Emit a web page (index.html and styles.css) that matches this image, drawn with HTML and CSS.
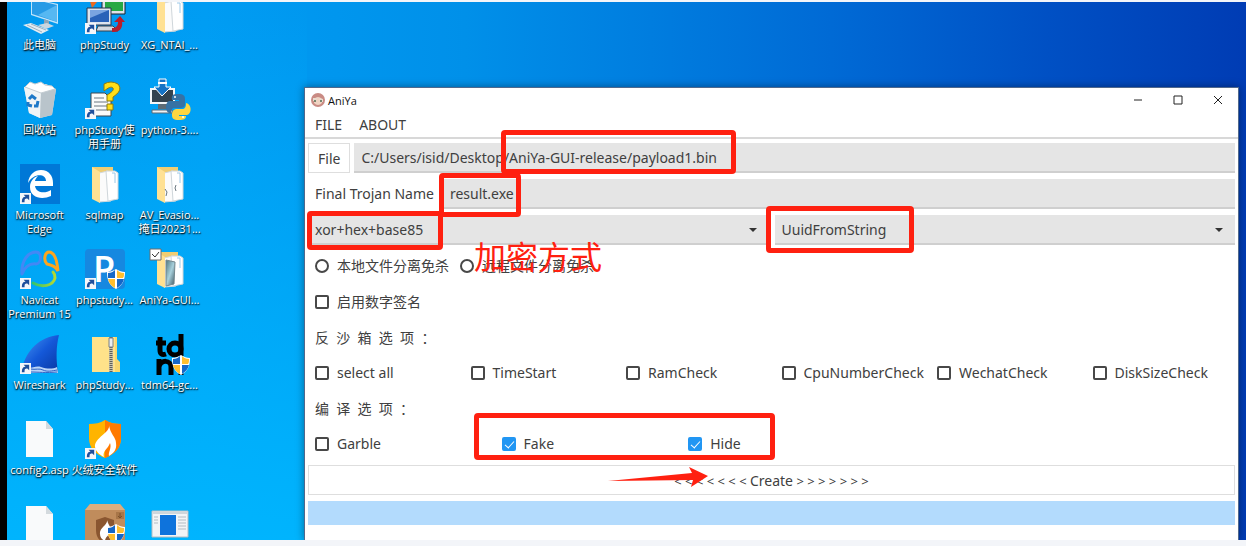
FILE: index.html
```html
<!doctype html>
<html lang="zh-CN">
    <head>
        <meta charset="utf-8">
        <title>AniYa</title>
        <link rel="stylesheet" href="styles.css">
    </head>

    <body>
    <!-- shared icon parts -->
    <svg class="defs" aria-hidden="true">
        <defs>
            <linearGradient id="fin" x1="0" y1="0" x2="1" y2="1">
                <stop offset="0" stop-color="#4a9bf5"/>
                <stop offset=".5" stop-color="#1458d8"/>
                <stop offset="1" stop-color="#0836a0"/>
            </linearGradient>
            <linearGradient id="navicat" x1="0" y1="0" x2="1" y2="0">
                <stop offset="0" stop-color="#35c46a"/>
                <stop offset="1" stop-color="#b5d832"/>
            </linearGradient>
            <linearGradient id="photo" x1="0" y1="0" x2="1" y2="1">
                <stop offset="0" stop-color="#4c7680"/>
                <stop offset=".5" stop-color="#a8d0dc"/>
                <stop offset="1" stop-color="#38505a"/>
            </linearGradient>
            <symbol id="shortcut" viewBox="0 0 12 12">
                <path d="M0 0h12v12H0z" fill="#f4f6fa"/>
                <path d="M2 10c0-4 1-6 4-6L4 2h6v6L8 6c-3 0-3 1-3 4z" fill="#1f4f9c"/>
            </symbol>
            <symbol id="shield" viewBox="0 0 18 20">
                <path d="M9 0c3 2 6 3 9 3 0 8-2 13-9 17C2 16 0 11 0 3c3 0 6-1 9-3z" fill="#fff"/>
                <path d="M8 1v8H1V4c3 0 5-1 7-3zM10 10h7c-1 4-3 6-7 9z" fill="#1467c8"/>
                <path d="M10 1c2 2 4 3 7 3 0 2 0 4-1 5h-6zM1 10h7v9c-4-2-6-5-7-9z" fill="#ffbe2e"/>
            </symbol>
            <symbol id="folder" viewBox="0 0 40 40">
                <path d="M7 3h21v30H7z" fill="#f0cd72"/>
                <path d="M14 9l9-2 3 3v27l-12 1z" fill="#fbfbfb" stroke="#d3d9dc"/>
                <path d="M21 7h9l3 2v26l-10 2z" fill="#fff" stroke="#cfd6da"/>
                <path d="M27 9h3v10" fill="none" stroke="#9cc9e8"/>
                <path d="M7 3l8 5v31l-8-4z" fill="#ffe193"/>
            </symbol>
            <symbol id="page" viewBox="0 0 40 40">
                <path d="M6 2h20l7 8v28H6z" fill="#f9fafb"/>
                <path d="M26 2v8h7z" fill="#d4dade"/>
            </symbol>
        </defs>
    </svg>

    <main class="desktop">
        <ul class="icons">
            <li>
                <svg viewBox="0 0 40 40">
                    <path d="M11 4l27 6v20l-27-9z" fill="#bfe4fa"/>
                    <path d="M12 5l25 6v17l-25-8z" fill="#279be6"/>
                    <path d="M37 11v17l-19-7z" fill="#56b8f2"/>
                    <path d="M24 25l5 2v5l-5-2z" fill="#8fa5b5"/>
                    <path d="M18 31l9-2 7 3-8 3z" fill="#c8d6e0"/>
                    <path d="M3 31l8-2 18 7-8 4z" fill="#e3ecf2"/>
                    <path d="M7 31l15 7m-11-8l15 6" stroke="#9ab0c0"/>
                </svg>
                <span>此电脑</span>
            </li>
            <li>
                <svg viewBox="0 0 40 40">
                    <path d="M4 4l8 4-5 6z" fill="#e86a20"/>
                    <path d="M17 3h23v17H17z" fill="#dde3e8" stroke="#1b2430"/>
                    <path d="M20 4h18v13H20z" fill="#27a844"/>
                    <path d="M2 14h24v17H2z" fill="#dce4ee" stroke="#26344e"/>
                    <path d="M5 16h19v12H5z" fill="#2a62b8"/>
                    <path d="M5 16h19L5 24z" fill="#7aa4e0"/>
                    <path d="M13 32h15l5 5H11z" fill="#d3d9e0" stroke="#39414c"/>
                    <path d="M27 38c9 1 11-6 10-10h3l-5-6-6 6h4c0 4-2 6-6 6z" fill="#b61f2c"/>
                    <use href="#shortcut" y="29" width="11" height="11"/>
                </svg>
                <span>phpStudy</span>
            </li>
            <li>
                <svg viewBox="0 0 40 40"><use href="#folder"/></svg>
                <span>XG_NTAI_...</span>
            </li>

            <li>
                <svg viewBox="0 0 40 40">
                    <path d="M4 8l22-3 10 5-4 26-12 3-11-5z" fill="#dbe3e8"/>
                    <path d="M4 8l17 5-1 26-11-5z" fill="#f0f4f6"/>
                    <path d="M36 10l-15 3-1 26 12-3z" fill="#b9c4cb"/>
                    <path d="M5 8l5-5 5 2 6-2 4 3 7 1 3 3-14 4z" fill="#fff" stroke="#c3ccd2"/>
                    <g fill="none" stroke="#1d78c8" stroke-width="3">
                        <path d="M9 20l3-3 4 3M18 22l-1 5h-3M12 27l-4-1v-3"/>
                    </g>
                </svg>
                <span>回收站</span>
            </li>
            <li>
                <svg viewBox="0 0 40 40">
                    <path d="M6 14h14l6 6v17H6z" fill="#fafafa" stroke="#3c4650"/>
                    <path d="M9 19h10M9 23h14M9 27h14M9 31h14" stroke="#6b7680"/>
                    <path d="M19 12V5q7-4 14 0c4 5 1 9-5 13v4h-6v-6c5-3 7-5 6-7-2-2-5 0-9 3zM22 25h6v6h-6z" fill="#ffde17" stroke="#8a7a10"/>
                    <use href="#shortcut" y="29" width="11" height="11"/>
                </svg>
                <span>phpStudy使用手册</span>
            </li>
            <li>
                <svg viewBox="0 0 40 40">
                    <path d="M1 10h23v14H1z" fill="#34434f" stroke="#f3f6f8" stroke-width="2"/>
                    <path d="M8 25h9v5H8z" fill="#5c6b76"/>
                    <path d="M2 31h20v3H2z" fill="#eef2f5" stroke="#5c6b76"/>
                    <path d="M9 0h7v8h5l-9 9-8-9h5z" fill="#1673c5" stroke="#fff"/>
                    <path d="M8 4h9" stroke="#fff" stroke-width="2"/>
                    <path d="M28 15c6 0 7 2 7 5v5c0 3-2 4-5 4h-5c-3 0-4 2-4 5h-2c-4-1-4-11 0-12h10v-1h-7c-1-5 1-6 6-6z" fill="#3672a4"/>
                    <path d="M29 41c-6 0-7-2-7-5 0-4 2-6 5-6h5c3 0 4-2 4-6 6 1 6 11 1 12h-8v1h7c0 3-2 4-7 4z" fill="#ffd640"/>
                    <circle cx="25" cy="18" r="1" fill="#fff"/>
                    <circle cx="33" cy="38" r="1" fill="#fff"/>
                </svg>
                <span>python-3....</span>
            </li>

            <li>
                <svg viewBox="0 0 40 40">
                    <path d="M0 0h40v40H0z" fill="#0078d7"/>
                    <path d="M8 19C9 10 15 6 21 6c8 0 12 6 12 13v3H15c1 7 10 8 16 4v6c-9 4-21 2-21-9 0-6 4-10 8-11-2 2-3 4-3 5h11c0-8-13-8-18 2z" fill="#fff"/>
                    <use href="#shortcut" y="29" width="11" height="11"/>
                </svg>
                <span>Microsoft Edge</span>
            </li>
            <li>
                <svg viewBox="0 0 40 40"><use href="#folder"/></svg>
                <span>sqlmap</span>
            </li>
            <li>
                <svg viewBox="0 0 40 40">
                    <use href="#folder"/>
                    <path d="M15 25l2 3-1 4M26 21l-1 3 1 3" fill="none" stroke="#6a7780"/>
                </svg>
                <span>AV_Evasio... 掩日20231...</span>
            </li>

            <li>
                <svg viewBox="0 0 40 40">
                    <g fill="none" stroke-width="3" stroke-linecap="round">
                        <path d="M2 25C1 12 8 3 16 3c6 0 6 11 0 12-7-1-12 4-14 10" stroke="#4388f5"/>
                        <path d="M27 15c-4-4-2-12 2-12 5 0 8 8 9 19-2-4-6-6-11-7" stroke="#ffa51d"/>
                        <path d="M13 34c9 5 20 3 22-5 0-2 0-4-2-6" stroke="url(#navicat)"/>
                    </g>
                    <use href="#shortcut" y="29" width="11" height="11"/>
                </svg>
                <span>Navicat Premium 15</span>
            </li>
            <li>
                <svg viewBox="0 0 40 40">
                    <rect width="40" height="40" rx="4" fill="#1688e0"/>
                    <text x="8" y="33" class="logo-p">P</text>
                    <use href="#shield" x="22" y="20" width="18" height="20"/>
                    <use href="#shortcut" y="29" width="11" height="11"/>
                </svg>
                <span>phpstudy...</span>
            </li>
            <li>
                <svg viewBox="0 0 40 40">
                    <use href="#folder"/>
                    <path d="M16 11l9 2-1 22-8 2z" fill="url(#photo)" stroke="#74878e"/>
                    <path d="M0 0h11v11H0z" fill="#fff" stroke="#6c6c6c"/>
                    <path d="M2 5l3 3 4-5" fill="none" stroke="#333"/>
                </svg>
                <span>AniYa-GUI...</span>
            </li>

            <li>
                <svg viewBox="0 0 40 40">
                    <path d="M2 34C7 16 19 3 39 1c-3 12-3 24-1 38H4z" fill="url(#fin)"/>
                    <path d="M3 33c8 3 12-2 18 0s12 2 16 0l1 6H2z" fill="#b9d4f8"/>
                    <path d="M10 35c6 1 9-1 13 1s9 1 14 0M10 38c8 0 16 1 27 0" fill="none" stroke="#2c62c4"/>
                    <use href="#shortcut" y="29" width="11" height="11"/>
                </svg>
                <span>Wireshark</span>
            </li>
            <li>
                <svg viewBox="0 0 40 40">
                    <path d="M7 3h25v22l3 3v10H7z" fill="#f7d76f"/>
                    <path d="M7 3h23v35H7z" fill="#ffe28a"/>
                    <path d="M26 3v35" stroke="#c9c4ad" stroke-width="4"/>
                    <path d="M26 3v35" stroke="#60605a" stroke-width="3" stroke-dasharray="1 1"/>
                    <path d="M24 4h4v9h-4z" fill="#e9edf0" stroke="#7a8288"/>
                </svg>
                <span>phpStudy...</span>
            </li>
            <li>
                <svg viewBox="0 0 40 40">
                    <g fill="none" stroke="#000" stroke-width="5">
                        <path d="M10 3v13q0 6 6 4M6 9h10M31 0v22"/>
                        <ellipse cx="25" cy="15" rx="6" ry="6"/>
                        <path d="M9 41V25M9 33c2-8 12-7 12 0v8M31 26v15"/>
                    </g>
                    <use href="#shield" x="22" y="21" width="18" height="20"/>
                </svg>
                <span>tdm64-gc...</span>
            </li>

            <li>
                <svg viewBox="0 0 40 40"><use href="#page"/></svg>
                <span>config2.asp</span>
            </li>
            <li>
                <svg viewBox="0 0 40 40">
                    <path d="M20 1c5 3 10 4 16 4v14c0 10-6 16-16 20C10 35 4 29 4 19V5c6 0 11-1 16-4z" fill="#ffb400"/>
                    <path d="M20 1c5 3 10 4 16 4v14c0 10-6 16-16 20z" fill="#ff7a00"/>
                    <path d="M24 6c2 7-15 13-14 22 1 5 5 8 9 10-2-6 4-8 6-14 2 5-2 9-1 13 5-3 8-7 7-13 0-6-6-9-7-18z" fill="#fff"/>
                    <use href="#shortcut" y="29" width="11" height="11"/>
                </svg>
                <span>火绒安全软件</span>
            </li>
            <li></li>

            <li>
                <svg viewBox="0 0 40 40"><use href="#page"/></svg>
            </li>
            <li>
                <svg viewBox="0 0 40 40">
                    <path d="M5 0h30l5 6v34H0V6z" fill="#c08c5c"/>
                    <path d="M5 0h30l5 6H0z" fill="#dcae80"/>
                    <path d="M31 8h8v7h-8z" fill="#a87648"/>
                    <path d="M35 9v4m-2-1l2 2 2-2" fill="none" stroke="#7a4f2a"/>
                    <path d="M20 13l9 3v10c0 8-4 11-9 14-5-3-9-6-9-14V16z" fill="#8a5630"/>
                    <path d="M22 16c1 5-8 8-7 14 0 4 3 6 5 7 0-5 7-7 6-12-1-3-3-5-4-9z" fill="#fff"/>
                    <use href="#shield" x="22" y="20" width="18" height="20"/>
                </svg>
            </li>
            <li>
                <svg viewBox="0 0 40 40">
                    <path d="M2 7h36v26H2z" fill="#f2f4f6" stroke="#b4bcc2"/>
                    <path d="M3 8h34v2H3z" fill="#cfd6db"/>
                    <path d="M10 11h16v20H10z" fill="#0e73dc"/>
                    <path d="M4 13h4M4 16h4M4 19h4M28 13h8M28 16h8M28 19h8M28 22h8M28 25h8" stroke="#b3bcc3"/>
                </svg>
            </li>
        </ul>

        <section class="window">
            <header class="titlebar">
                <svg class="avatar" viewBox="0 0 14 14">
                    <circle cx="7" cy="7" r="7" fill="#c98b84"/>
                    <path d="M3 6q4-4 8 0v4q-4 4-8 0z" fill="#f0d3c2"/>
                    <path d="M2 5h4L5 8H2zM8 5l4 1v3H9z" fill="#e9dcd0"/>
                    <circle cx="4" cy="8" r="1" fill="#4f6b50"/>
                    <circle cx="10" cy="8" r="1" fill="#4f6b50"/>
                </svg>
                <h1>AniYa</h1>
                <button aria-label="Minimize"><svg viewBox="0 0 10 10"><path d="M1 5h8"/></svg></button>
                <button aria-label="Maximize"><svg viewBox="0 0 10 10"><path d="M1 1h8v8H1z"/></svg></button>
                <button aria-label="Close"><svg viewBox="0 0 10 10"><path d="M1 1l8 8M9 1L1 9"/></svg></button>
            </header>
            <nav class="menubar">
                <button>FILE</button>
                <button>ABOUT</button>
            </nav>

            <form class="content">
                <div class="row file-row">
                    <button type="button" class="outlined">File</button>
                    <input class="field" type="text" aria-label="File" value="C:/Users/isid/Desktop/AniYa-GUI-release/payload1.bin">
                </div>
                <div class="row name-row">
                    <label for="name">Final Trojan Name</label>
                    <input class="field" type="text" id="name" value="result.exe">
                </div>
                <div class="row selects">
                    <div class="select">
                        <select class="field" aria-label="Encoding"><option>xor+hex+base85</option></select>
                        <svg viewBox="0 0 8 4"><path d="M0 0h8L4 4z"/></svg>
                    </div>
                    <div class="select">
                        <select class="field" aria-label="Method"><option>UuidFromString</option></select>
                        <svg viewBox="0 0 8 4"><path d="M0 0h8L4 4z"/></svg>
                    </div>
                </div>
                <div class="row radios">
                    <label><input type="radio" name="mode">本地文件分离免杀</label>
                    <label><input type="radio" name="mode">远程文件分离免杀</label>
                </div>
                <div class="row">
                    <label><input type="checkbox">启用数字签名</label>
                </div>
                <h2>反  沙  箱  选  项  ：</h2>
                <div class="row six">
                    <label><input type="checkbox">select all</label>
                    <label><input type="checkbox">TimeStart</label>
                    <label><input type="checkbox">RamCheck</label>
                    <label><input type="checkbox">CpuNumberCheck</label>
                    <label><input type="checkbox">WechatCheck</label>
                    <label><input type="checkbox">DiskSizeCheck</label>
                </div>
                <h2>编  译  选  项  ：</h2>
                <div class="row five">
                    <label><input type="checkbox">Garble</label>
                    <label><input type="checkbox" checked>Fake</label>
                    <label><input type="checkbox" checked>Hide</label>
                </div>
                <button type="button" class="outlined create"><span>&lt; &lt; &lt; &lt; &lt; &lt; &lt; </span>Create<span> &gt; &gt; &gt; &gt; &gt; &gt; &gt;</span></button>
                <div class="progress" role="progressbar" aria-label="Progress"></div>
            </form>
        </section>

        <!-- red marks over the window -->
        <div class="mark mark-path"></div>
        <div class="mark mark-name"></div>
        <div class="mark mark-encoding"></div>
        <div class="mark mark-method"></div>
        <div class="mark mark-options"></div>
        <p class="note">加密方式</p>
        <svg class="arrow" viewBox="0 0 100 22"><path d="M0 15L84 7 81 1l19 9-17 11 2-7z"/></svg>
    </main>
    </body>
</html>
```
FILE: styles.css
```css
* {
    box-sizing: border-box;
}

body {
    margin: 0;
    padding: 2px 0 6px;
    height: 100vh;
    background: #f3f5f9;
    font-family: "Noto Sans", "Noto Sans CJK SC", sans-serif;
    font-size: 14px;
    color: #404040;
}

button, input, select {
    font: inherit;
    color: inherit;
    margin: 0;
}

.defs {
    position: absolute;
    width: 0;
    height: 0;
}

.desktop {
    position: relative;
    height: 100%;
    overflow: hidden;
    border-left: 7px solid #000;
    background:
        linear-gradient(to bottom, rgba(0, 183, 255, 0), rgba(0, 183, 255, .9)) left / 300px 100% no-repeat,
        linear-gradient(to right, #0098ee 0%, #009cf3 16%, #0090e9 37%, #007ddf 52%, #0068d4 68%, #0050c4 84%, #003cb4 100%);
}

/* desktop icons */
.icons {
    margin: -8px 0 0;
    padding: 0;
    list-style: none;
    display: grid;
    grid-template-columns: repeat(3, 65px);
    grid-auto-rows: 85px;
}

.icons li {
    display: flex;
    flex-direction: column;
    align-items: center;
    gap: 4px;
}

.icons svg {
    width: 40px;
    height: 40px;
    flex: none;
    overflow: visible;
}

.icons span {
    width: 68px;
    font-family: "Open Sans", "Noto Sans CJK SC", sans-serif;
    font-size: 11px;
    line-height: 14px;
    text-align: center;
    color: #fff;
    text-shadow: 0 1px 2px #000, 1px 1px 1px rgba(0, 0, 0, .7);
}

.logo-p {
    font-family: "Open Sans", sans-serif;
    font-size: 36px;
    font-weight: 600;
    fill: #fff;
}

/* application window */
.window {
    position: absolute;
    top: 85px;
    right: 7px;
    bottom: 0;
    left: 297px;
    background: #fff;
    border: 1px solid #50688c;
    border-width: 1px 1px 0;
    box-shadow: 0 0 8px rgba(0, 0, 0, .4);
}

.titlebar {
    display: flex;
    align-items: center;
    height: 24px;
    padding-left: 6px;
}

.avatar {
    width: 14px;
    height: 14px;
    margin-right: 3px;
}

.titlebar h1 {
    margin: 0;
    flex: 1;
    font-family: "Open Sans", sans-serif;
    font-size: 11px;
    font-weight: normal;
    color: #111;
}

.titlebar button {
    display: flex;
    align-items: center;
    justify-content: center;
    width: 40px;
    height: 24px;
    padding: 0;
    border: 0;
    background: none;
}

.titlebar button svg {
    width: 10px;
    height: 10px;
    fill: none;
    stroke: #222;
}

.menubar {
    display: flex;
    align-items: center;
    gap: 17px;
    height: 27px;
    padding: 0 10px;
    border-bottom: 2px solid #d8d8d8;
}

.menubar button {
    padding: 0;
    border: 0;
    background: none;
}

.content {
    display: flex;
    flex-direction: column;
    gap: 6px;
    padding: 4px 3px;
}

.row {
    display: flex;
    align-items: center;
    height: 30px;
}

.row label {
    display: flex;
    align-items: center;
    gap: 8px;
    padding-left: 7px;
    line-height: 20px;
    white-space: nowrap;
}

.file-row {
    gap: 4px;
}

.name-row {
    gap: 9px;
}

.field {
    flex: 1;
    min-width: 0;
    width: 100%;
    height: 30px;
    padding: 0 7px;
    border: 0;
    border-bottom: 2px solid #cfcfcf;
    border-radius: 0;
    background: #e5e5e5;
    appearance: none;
}

.outlined {
    height: 30px;
    padding: 0 9px;
    border: 1px solid #dedede;
    background: #fff;
}

.selects, .six {
    display: grid;
    grid-template-columns: repeat(2, 1fr);
    gap: 6px;
}

.six {
    grid-template-columns: repeat(6, 1fr);
}

.five {
    display: grid;
    grid-template-columns: repeat(5, 1fr);
    gap: 6px;
}

.select {
    position: relative;
}

.select .field {
    display: block;
}

.select svg {
    position: absolute;
    right: 12px;
    top: 13px;
    width: 8px;
    height: 4px;
    fill: #333;
    pointer-events: none;
}

.radios {
    gap: 4px;
}

input[type="radio"], input[type="checkbox"] {
    appearance: none;
    width: 14px;
    height: 14px;
    border: 2px solid #484848;
    border-radius: 2px;
}

input[type="radio"] {
    border-radius: 50%;
}

input[type="checkbox"]:checked {
    position: relative;
    border-color: #2196f3;
    background: #2196f3;
}

input[type="checkbox"]:checked::after {
    content: "";
    position: absolute;
    left: 3px;
    top: 0;
    width: 4px;
    height: 8px;
    border: solid #fff;
    border-width: 0 1px 1px 0;
    transform: rotate(42deg);
}

h2 {
    margin: 0;
    padding-left: 7px;
    font-size: 14px;
    font-weight: normal;
    line-height: 29px;
    height: 29px;
    white-space: pre;
}

.create {
    width: 100%;
}

.create span {
    font-size: 13px;
}

.progress {
    height: 24px;
    background: #b3dbfd;
}

/* marks */
.mark {
    position: absolute;
    border: 5px solid #ff2010;
    border-radius: 4px;
}

.mark-path {
    left: 494px;
    top: 128px;
    width: 235px;
    height: 44px;
}

.mark-name {
    left: 432px;
    top: 171px;
    width: 82px;
    height: 44px;
}

.mark-encoding {
    left: 300px;
    top: 209px;
    width: 136px;
    height: 39px;
}

.mark-method {
    left: 759px;
    top: 204px;
    width: 148px;
    height: 47px;
}

.mark-options {
    left: 467px;
    top: 411px;
    width: 301px;
    height: 47px;
}

.note {
    position: absolute;
    left: 467px;
    top: 235px;
    margin: 0;
    font-size: 32px;
    line-height: 40px;
    color: #ff2010;
}

.arrow {
    position: absolute;
    left: 601px;
    top: 464px;
    width: 100px;
    height: 22px;
    fill: #ff2010;
}
```
